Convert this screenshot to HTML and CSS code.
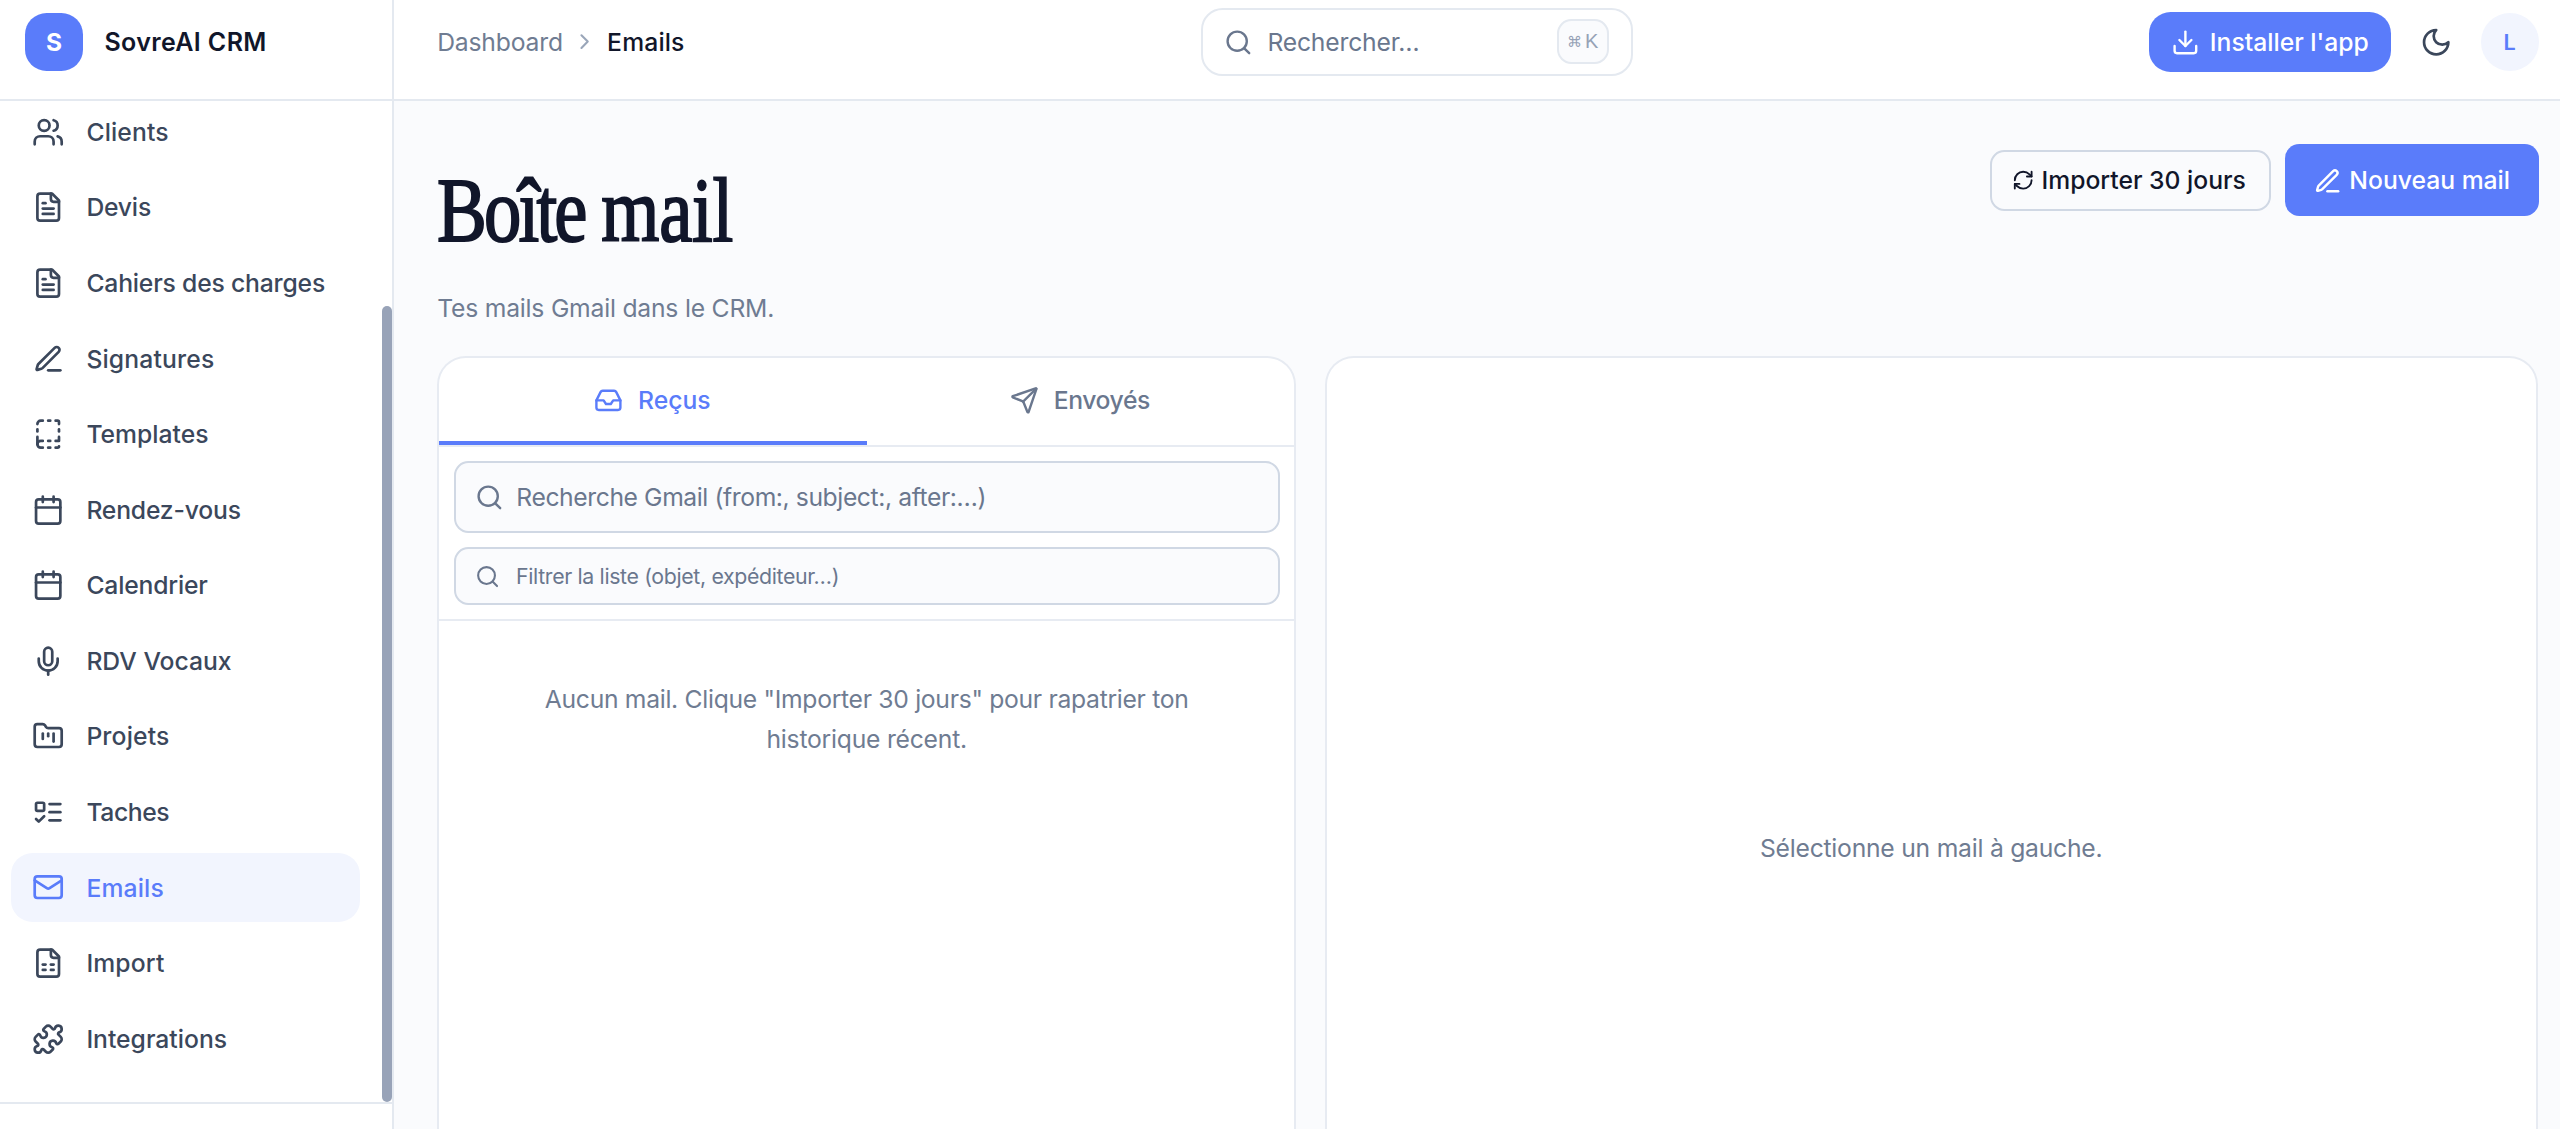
FILE: index.html
```html
<!DOCTYPE html>
<html lang="fr">
<head>
<meta charset="utf-8">
<title>SovreAI CRM – Emails</title>
<link rel="stylesheet" href="styles.css">
</head>
<body>
<svg class="sprite" aria-hidden="true">
  <symbol id="users" viewBox="0 0 24 24"><path d="M16 21v-2a4 4 0 0 0-4-4H6a4 4 0 0 0-4 4v2"/><circle cx="9" cy="7" r="4"/><path d="M22 21v-2a4 4 0 0 0-3-3.87"/><path d="M16 3.13a4 4 0 0 1 0 7.75"/></symbol>
  <symbol id="file-text" viewBox="0 0 24 24"><path d="M15 2H6a2 2 0 0 0-2 2v16a2 2 0 0 0 2 2h12a2 2 0 0 0 2-2V7Z"/><path d="M14 2v4a2 2 0 0 0 2 2h4"/><path d="M10 9H8"/><path d="M16 13H8"/><path d="M16 17H8"/></symbol>
  <symbol id="pen-line" viewBox="0 0 24 24"><path d="M12 21h9"/><path d="M16.376 3.622a1 1 0 0 1 3.002 3.002L7.368 18.635a2 2 0 0 1-.855.506l-2.872.838a.5.5 0 0 1-.62-.62l.838-2.872a2 2 0 0 1 .506-.854z" transform="translate(.4 .7)"/></symbol>
  <symbol id="template" viewBox="0 0 24 24"><path d="M12 17h1.500"/><path d="M12 22h1.500"/><path d="M12 2h1.500"/><path d="M17.500 22H19a1 1 0 0 0 1-1"/><path d="M17.500 2H19a1 1 0 0 1 1 1v1.500"/><path d="M20 14v3h-2.500"/><path d="M20 8.500V10"/><path d="M4 10V8.500"/><path d="M4 19.500V14"/><path d="M4 4.500A2.500 2.500 0 0 1 6.500 2H8"/><path d="M8 22H6.500a1 1 0 0 1 0-5H8"/></symbol>
  <symbol id="calendar" viewBox="0 0 24 24"><path d="M8 2v4"/><path d="M16 2v4"/><rect width="18" height="18" x="3" y="4" rx="2"/><path d="M3 10h18"/></symbol>
  <symbol id="mic" viewBox="0 0 24 24"><path d="M12 19v3"/><path d="M19 10v2a7 7 0 0 1-14 0v-2"/><rect x="9" y="2" width="6" height="13" rx="3"/></symbol>
  <symbol id="folder-kanban" viewBox="0 0 24 24"><path d="M4 20h16a2 2 0 0 0 2-2V8a2 2 0 0 0-2-2h-7.930a2 2 0 0 1-1.660-.9l-.82-1.200A2 2 0 0 0 7.930 3H4a2 2 0 0 0-2 2v13c0 1.100.9 2 2 2Z"/><path d="M8 10v4"/><path d="M12 10v2"/><path d="M16 10v6"/></symbol>
  <symbol id="list-todo" viewBox="0 0 24 24"><rect x="3" y="5" width="6" height="6" rx="1"/><path d="m3 17 2 2 4-4"/><path d="M13 6h8"/><path d="M13 12h8"/><path d="M13 18h8"/></symbol>
  <symbol id="mail" viewBox="0 0 24 24"><rect width="20" height="16" x="2" y="4" rx="2"/><path d="m22 7-8.970 5.700a1.940 1.940 0 0 1-2.060 0L2 7"/></symbol>
  <symbol id="file-sheet" viewBox="0 0 24 24"><path d="M15 2H6a2 2 0 0 0-2 2v16a2 2 0 0 0 2 2h12a2 2 0 0 0 2-2V7Z"/><path d="M14 2v4a2 2 0 0 0 2 2h4"/><path d="M8 13h2"/><path d="M14 13h2"/><path d="M8 17h2"/><path d="M14 17h2"/></symbol>
  <symbol id="puzzle" viewBox="0 0 24 24"><path d="M15.390 4.390a1 1 0 0 0 1.680-.474 2.500 2.500 0 1 1 3.014 3.015 1 1 0 0 0-.474 1.680l1.683 1.682a2.414 2.414 0 0 1 0 3.414L19.610 15.390a1 1 0 0 1-1.680-.474 2.500 2.500 0 1 0-3.014 3.015 1 1 0 0 1 .474 1.680l-1.683 1.682a2.414 2.414 0 0 1-3.414 0L8.610 19.610a1 1 0 0 0-1.680.474 2.500 2.500 0 1 1-3.014-3.015 1 1 0 0 0 .474-1.680l-1.683-1.682a2.414 2.414 0 0 1 0-3.414L4.390 8.610a1 1 0 0 1 1.680.474 2.500 2.500 0 1 0 3.014-3.015 1 1 0 0 1-.474-1.680l1.683-1.682a2.414 2.414 0 0 1 3.414 0z"/></symbol>
  <symbol id="chevron" viewBox="0 0 24 24"><path d="m9 18 6-6-6-6"/></symbol>
  <symbol id="search" viewBox="0 0 24 24"><circle cx="11" cy="11" r="8"/><path d="m21 21-4.300-4.300"/></symbol>
  <symbol id="download" viewBox="0 0 24 24"><path d="M21 15v4a2 2 0 0 1-2 2H5a2 2 0 0 1-2-2v-4"/><path d="m7 10 5 5 5-5"/><path d="M12 15V3"/></symbol>
  <symbol id="moon" viewBox="0 0 24 24"><path d="M12 3a6 6 0 0 0 9 9 9 9 0 1 1-9-9Z"/></symbol>
  <symbol id="refresh" viewBox="0 0 24 24"><path d="M3 12a9 9 0 0 1 9-9 9.750 9.750 0 0 1 6.740 2.740L21 8"/><path d="M21 3v5h-5"/><path d="M21 12a9 9 0 0 1-9 9 9.750 9.750 0 0 1-6.740-2.740L3 16"/><path d="M8 16H3v5"/></symbol>
  <symbol id="inbox" viewBox="0 0 24 24"><path d="M22 12h-6l-2 3h-4l-2-3H2"/><path d="M5.450 5.110 2 12v6a2 2 0 0 0 2 2h16a2 2 0 0 0 2-2v-6l-3.450-6.890A2 2 0 0 0 16.760 4H7.240a2 2 0 0 0-1.790 1.110z"/></symbol>
  <symbol id="send" viewBox="0 0 24 24"><path d="M14.536 21.686a.5.5 0 0 0 .937-.024l6.500-19a.496.496 0 0 0-.635-.635l-19 6.500a.5.5 0 0 0-.024.937l7.930 3.180a2 2 0 0 1 1.112 1.110z"/><path d="m21.854 2.147-10.940 10.939"/></symbol>
</svg>

<div class="app">
  <aside class="sidebar">
    <div class="brand">
      <span class="logo">S</span>
      <span class="brand-name">SovreAI CRM</span>
    </div>
    <div class="nav-scroll">
      <nav class="nav">
        <a class="item"><svg class="icon"><use href="#users"/></svg><span class="wide">Clients</span></a>
        <a class="item"><svg class="icon"><use href="#file-text"/></svg><span class="tight">Devis</span></a>
        <a class="item"><svg class="icon"><use href="#file-text"/></svg><span class="tight">Cahiers des charges</span></a>
        <a class="item"><svg class="icon"><use href="#pen-line"/></svg><span class="wide">Signatures</span></a>
        <a class="item"><svg class="icon"><use href="#template"/></svg><span>Templates</span></a>
        <a class="item"><svg class="icon"><use href="#calendar"/></svg><span class="tight">Rendez-vous</span></a>
        <a class="item"><svg class="icon"><use href="#calendar"/></svg><span class="tight">Calendrier</span></a>
        <a class="item"><svg class="icon"><use href="#mic"/></svg><span>RDV Vocaux</span></a>
        <a class="item"><svg class="icon"><use href="#folder-kanban"/></svg><span class="wide">Projets</span></a>
        <a class="item"><svg class="icon"><use href="#list-todo"/></svg><span class="tighter">Taches</span></a>
        <a class="item active"><svg class="icon"><use href="#mail"/></svg><span class="wide">Emails</span></a>
        <a class="item"><svg class="icon"><use href="#file-sheet"/></svg><span class="wide">Import</span></a>
        <a class="item"><svg class="icon"><use href="#puzzle"/></svg><span>Integrations</span></a>
      </nav>
      <div class="track"><div class="thumb"></div></div>
    </div>
    <div class="side-foot"></div>
  </aside>

  <div class="content">
    <header class="topbar">
      <div class="crumbs">
        <span class="tight">Dashboard</span>
        <svg class="icon xs"><use href="#chevron"/></svg>
        <span class="current wide">Emails</span>
      </div>
      <div class="search">
        <svg class="icon sm"><use href="#search"/></svg>
        <span class="search-label">Rechercher…</span>
        <kbd class="kbd"><span class="cmd">⌘</span>K</kbd>
      </div>
      <div class="actions">
        <button class="install"><svg class="icon sm"><use href="#download"/></svg><span>Installer l'app</span></button>
        <svg class="icon moon"><use href="#moon"/></svg>
        <span class="avatar">L</span>
      </div>
    </header>

    <main class="main">
      <div class="head">
        <div class="titles">
          <h1 class="title">Boîte <span class="loose">mail</span></h1>
          <p class="subtitle">Tes mails Gmail dans le CRM.</p>
        </div>
        <div class="buttons">
          <button class="outline"><svg class="icon xxs"><use href="#refresh"/></svg><span>Importer 30 jours</span></button>
          <button class="primary"><svg class="icon sm"><use href="#pen-line"/></svg><span>Nouveau mail</span></button>
        </div>
      </div>

      <div class="panes">
        <section class="card list">
          <div class="tabs">
            <div class="tab on"><svg class="icon sm"><use href="#inbox"/></svg><span>Reçus</span></div>
            <div class="tab"><svg class="icon sm"><use href="#send"/></svg><span class="tighter">Envoyés</span></div>
          </div>
          <div class="filters">
            <div class="field"><svg class="icon sm"><use href="#search"/></svg><span>Recherche Gmail (from:, subject:, after:…)</span></div>
            <div class="field small"><svg class="icon xs"><use href="#search"/></svg><span>Filtrer la liste (objet, expéditeur…)</span></div>
          </div>
          <p class="empty">Aucun mail. Clique "Importer 30 jours" pour rapatrier ton<br><span class="second">historique récent.</span></p>
        </section>
        <section class="card reader"><p>Sélectionne un mail à gauche.</p></section>
      </div>
    </main>
  </div>
</div>
</body>
</html>
```
FILE: styles.css
```css
* { box-sizing: border-box; }
body {
  margin: 0;
  font-family: Inter, "Liberation Sans", sans-serif;
  font-size: 24.7px;
  line-height: 40px;
  color: #11162a;
  background: #fafbfd;
}
p, h1 { margin: 0; }
button { font: inherit; border: 0; margin: 0; }
.sprite { display: none; }
.icon {
  width: 32.4px;
  height: 32.4px;
  flex: none;
  fill: none;
  stroke: currentColor;
  stroke-width: 2;
  stroke-linecap: round;
  stroke-linejoin: round;
}
.icon.sm { width: 28.8px; height: 28.8px; }
.icon.xs { width: 25.2px; height: 25.2px; }
.icon.xxs { width: 22.4px; height: 22.4px; }
.wide { letter-spacing: .15px; }
.tight { letter-spacing: -.18px; }
.tighter { letter-spacing: -.4px; }

.app { display: flex; width: 2560px; height: 1129px; overflow: hidden; }

/* sidebar */
.sidebar {
  width: 394px;
  flex: none;
  display: flex;
  flex-direction: column;
  background: #fff;
  border-right: 2px solid #e4e9f0;
}
.brand {
  height: 101px;
  flex: none;
  display: flex;
  align-items: center;
  gap: 21.6px;
  padding: 0 0 15px 25.2px;
  border-bottom: 2px solid #e4e9f0;
}
.logo {
  width: 57.6px;
  height: 57.6px;
  border-radius: 21.6px;
  background: #5a7cfa;
  color: #fff;
  font-weight: 700;
  font-size: 24.5px;
  display: flex;
  align-items: center;
  justify-content: center;
}
.brand-name { font-weight: 600; font-size: 25px; letter-spacing: .38px; }
.nav-scroll { height: 1001px; flex: none; display: flex; overflow: hidden; }
.nav {
  width: 381.5px;
  flex: none;
  margin-top: -3.4px;
  padding: 0 21.6px 0 10.8px;
  display: flex;
  flex-direction: column;
  gap: 7.2px;
}
.item {
  height: 68.4px;
  flex: none;
  display: flex;
  align-items: center;
  gap: 21.6px;
  padding-left: 21.6px;
  border-radius: 21.6px;
  font-weight: 500;
  color: #3b475b;
}
.item.active { background: #f2f5fe; color: #5a7cfa; }
.track { width: 11px; padding-top: 205px; }
.thumb { height: 796px; border-radius: 6px; background: #98a3b8; }
.side-foot { flex: 1; border-top: 2px solid #e4e9f0; }

/* top bar */
.content { flex: 1; display: flex; flex-direction: column; }
.topbar {
  height: 101px;
  flex: none;
  display: grid;
  grid-template-columns: 763.5px 432px 1fr;
  align-items: center;
  padding: 0 21.5px 15px 43.2px;
  background: #fff;
  border-bottom: 2px solid #e4e9f0;
}
.crumbs { display: flex; align-items: center; color: #6f7c92; }
.crumbs .icon { margin: 0 10px 0 9px; color: #9aa6b9; }
.current { font-weight: 500; color: #11162a; }
.search {
  height: 68.4px;
  display: flex;
  align-items: center;
  padding: 0 22px 0 21.5px;
  border: 2px solid #e4e9f0;
  border-radius: 21.6px;
  color: #6a778e;
}
.search-label { flex: 1; margin-left: 14.4px; letter-spacing: -.18px; }
.kbd {
  width: 52px;
  height: 45px;
  display: flex;
  align-items: center;
  justify-content: center;
  gap: 3px;
  border: 2px solid #e4e9f0;
  border-radius: 14.4px;
  background: #fafbfd;
  font: 20px "Liberation Sans", sans-serif;
  color: #96a2b6;
}
.cmd { font: 15px "DejaVu Sans", sans-serif; }
.actions { display: flex; align-items: center; justify-content: flex-end; }
.install {
  width: 241.5px;
  height: 59.4px;
  display: flex;
  align-items: center;
  gap: 10px;
  padding: 0 0 0 21.6px;
  border-radius: 21.6px;
  background: #5a7cfa;
  color: #fff;
  font-weight: 500;
}
.moon { margin: 0 29px 0 28.6px; color: #3b475b; }
.avatar {
  width: 57.6px;
  height: 57.6px;
  border-radius: 50%;
  display: flex;
  align-items: center;
  justify-content: center;
  background: #f2f5fe;
  color: #5a7cfa;
  font-weight: 600;
  font-size: 21.6px;
}

/* page */
.main { flex: 1; padding: 43.2px 21.5px 0 43.2px; display: flex; flex-direction: column; min-height: 0; }
.head { height: 212.3px; flex: none; display: flex; justify-content: space-between; }
.title {
  width: 386px;
  height: 133px;
  line-height: 133px;
  white-space: nowrap;
  font-family: "Liberation Serif", serif;
  font-weight: 400;
  font-size: 92px;
  letter-spacing: -3.5px;
  word-spacing: 1px;
  -webkit-text-stroke: 2px currentColor;
  transform: scaleX(.812);
  transform-origin: 0 0;
}
.loose { letter-spacing: -.3px; }
.subtitle { margin-top: 11px; color: #6f7c92; letter-spacing: -.21px; }
.buttons { display: flex; align-items: center; gap: 14.4px; height: 72px; }
.outline, .primary { display: flex; align-items: center; border-radius: 14.4px; font-weight: 500; }
.outline {
  width: 281px;
  height: 61.2px;
  padding: 0 0 0 20px;
  gap: 7.5px;
  background: #fafbfd;
  border: 2px solid #d0d8e4;
  color: #11162a;
}
.primary {
  width: 253.5px;
  height: 72px;
  padding: 0 0 0 28px;
  gap: 7.5px;
  background: #5a7cfa;
  color: #fff;
}

.panes { display: grid; grid-template-columns: 859px 1213px; gap: 28.5px; }
.card {
  height: 772.5px;
  background: #fff;
  border: 2px solid #e7ebf2;
  border-bottom: 0;
  border-radius: 28.8px 28.8px 0 0;
  overflow: hidden;
}
.tabs { height: 88.5px; display: grid; grid-template-columns: 1fr 1fr; border-bottom: 2px solid #e7ebf2; }
.tab {
  display: flex;
  align-items: center;
  justify-content: center;
  gap: 15px;
  padding: 1px 1px 0 0;
  font-weight: 500;
  color: #6a778e;
  border-bottom: 4px solid transparent;
}
.tab.on { color: #5a7cfa; border-bottom-color: #5a7cfa; }
.filters {
  display: flex;
  flex-direction: column;
  gap: 14.4px;
  padding: 14px 14px 14px 14.5px;
  height: 174.5px;
  border-bottom: 2px solid #e7ebf2;
}
.field {
  height: 72px;
  flex: none;
  display: flex;
  align-items: center;
  gap: 12px;
  padding-left: 19.8px;
  background: #fafbfd;
  border: 2px solid #d0d8e4;
  border-radius: 14.4px;
  color: #6a778e;
  letter-spacing: -.41px;
}
.field.small { height: 57.6px; gap: 16px; padding-left: 19.2px; font-size: 21.3px; letter-spacing: -.35px; }
.empty { padding-top: 58px; text-align: center; color: #6f7c92; letter-spacing: -.3px; }
.second { letter-spacing: -.23px; }
.reader { display: flex; align-items: center; justify-content: center; padding-top: 209px; color: #6f7c92; letter-spacing: -.235px; }
```
